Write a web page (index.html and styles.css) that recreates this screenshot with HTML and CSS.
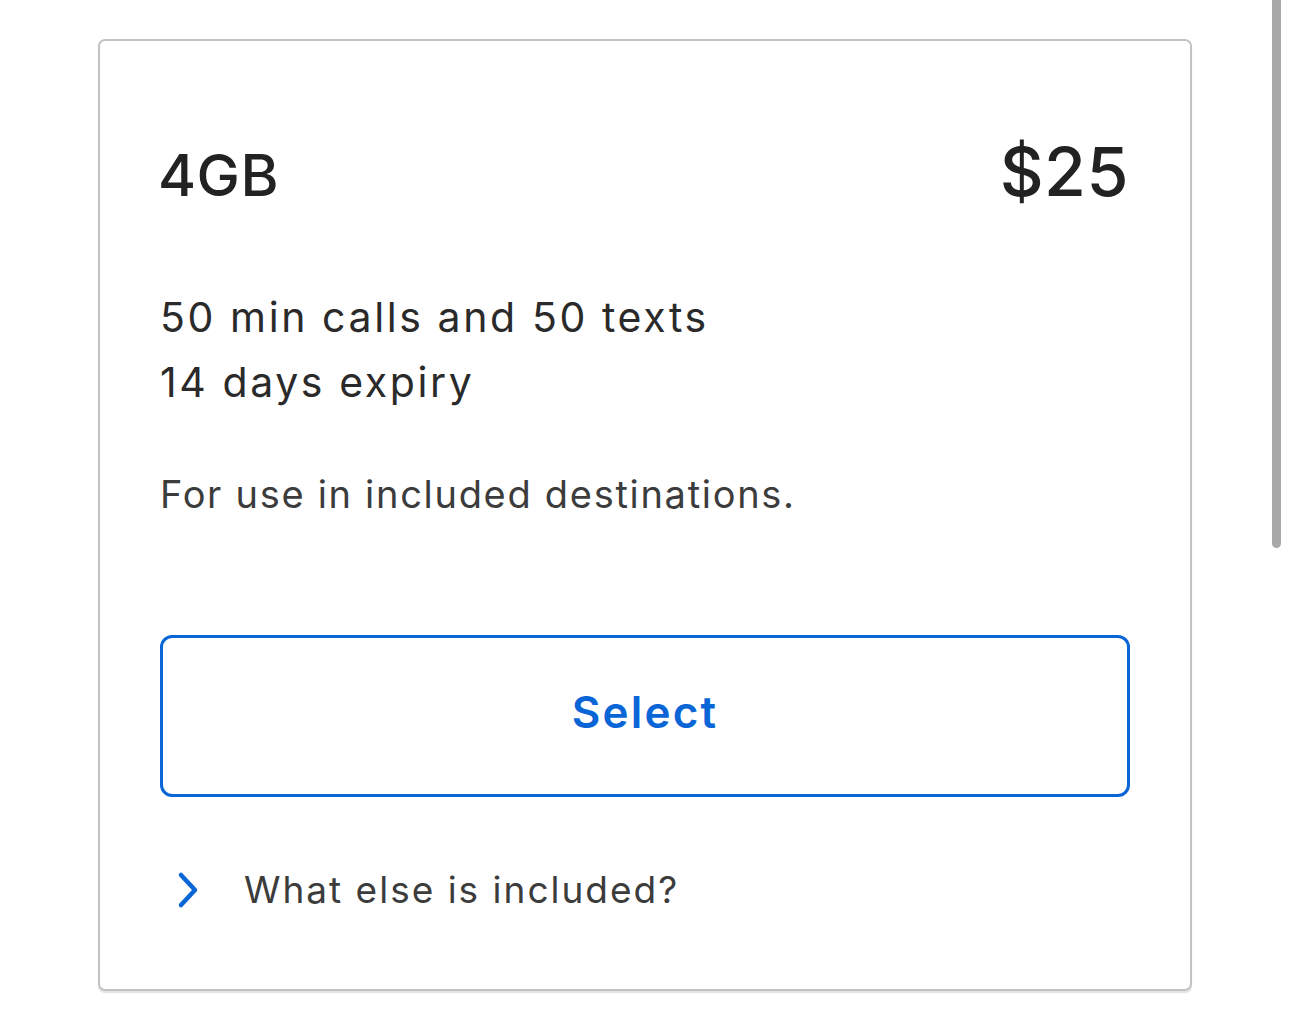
FILE: index.html
```html
<!DOCTYPE html>
<html lang="en">
<head>
    <meta charset="UTF-8">
    <meta name="viewport" content="width=device-width, initial-scale=1.0">
    <title>Plan 4GB</title>
    <link rel="stylesheet" href="styles.css">
</head>
<body>
    <div class="page">
        <div class="plan-card">
            <div class="plan-head">
                <h2 class="plan-data">4GB</h2>
                <div class="plan-price">$25</div>
            </div>
            <div class="plan-features">
                <div>50 min calls and 50 texts</div>
                <div>14 days expiry</div>
            </div>
            <p class="plan-note">For use in included destinations.</p>
            <button class="select-btn" type="button">Select</button>
            <div class="more-row">
                <svg class="chevron" width="24" height="38" viewBox="0 0 24 38">
                    <path d="M5 4 L19 19 L5 34" fill="none" stroke="#0a66d6" stroke-width="4.5" stroke-linecap="round" stroke-linejoin="round"/>
                </svg>
                <span class="more-label">What else is included?</span>
            </div>
        </div>
        <div class="scrollbar"></div>
    </div>
</body>
</html>
```

FILE: styles.css
```css
body {
    margin: 0;
    background: #fff;
    font-family: Inter, "Noto Sans", sans-serif;
    color: #262626;
}
.page {
    height: 1016px;
    overflow: hidden;
    position: relative;
    padding: 39px 0 0 98px;
    box-sizing: border-box;
}
.plan-card {
    width: 1094px;
    height: 952px;
    box-sizing: border-box;
    border: 2px solid #c2c2c2;
    border-radius: 7px;
    box-shadow: 0 2px 1px #e2e2e2;
    padding: 94px 60px 0 60px;
}
.plan-head {
    display: flex;
    justify-content: space-between;
    align-items: baseline;
    height: 72px;
}
.plan-data {
    margin: 0 0 0 -2px;
    font-size: 58px;
    font-weight: 500;
    line-height: 72px;
    letter-spacing: 0.5px;
    color: #222;
}
.plan-price {
    font-size: 68px;
    font-weight: 500;
    line-height: 72px;
    letter-spacing: 0.5px;
    color: #222;
    margin-right: 1px;
}
.plan-features {
    margin-top: 78px;
    font-size: 41px;
    line-height: 65px;
    letter-spacing: 2.6px;
    color: #2a2a2a;
}
.plan-note {
    margin: 54px 0 0;
    font-size: 38px;
    line-height: 50px;
    letter-spacing: 1.7px;
    color: #3c3c3c;
}
.select-btn {
    display: block;
    width: 970px;
    height: 162px;
    margin-top: 116px;
    padding: 0 0 8px;
    border: 3px solid #0a66d6;
    border-radius: 12px;
    background: #fff;
    color: #0a66d6;
    font-family: Inter, "Noto Sans", sans-serif;
    font-size: 44px;
    font-weight: 600;
    letter-spacing: 2.2px;
    cursor: pointer;
}
.more-row {
    display: flex;
    align-items: center;
    gap: 44px;
    margin-top: 70px;
    padding-left: 16px;
}
.chevron {
    display: block;
}
.more-label {
    font-size: 37px;
    letter-spacing: 2px;
    color: #3c3c3c;
}
.scrollbar {
    position: absolute;
    top: 0;
    left: 1272px;
    width: 9px;
    height: 548px;
    background: #a8a8a8;
    border-radius: 0 0 5px 5px;
}
```
